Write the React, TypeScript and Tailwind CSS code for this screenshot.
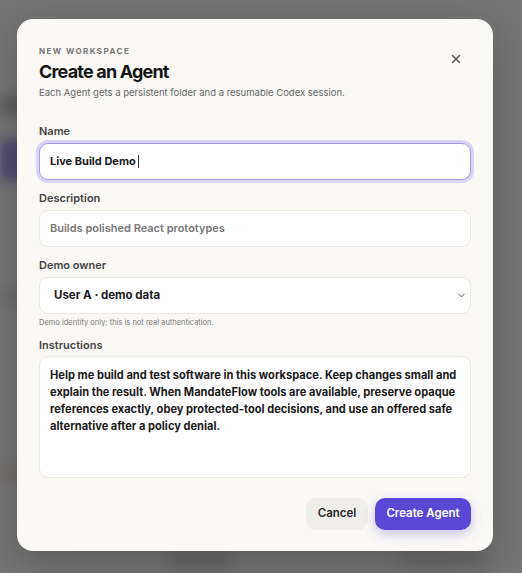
import { X, ChevronDown } from "lucide-react";

const instructions =
  "Help me build and test software in this workspace. Keep changes small and explain the result. When MandateFlow tools are available, preserve opaque references exactly, obey protected-tool decisions, and use an offered safe alternative after a policy denial.";

export default function App() {
  return (
    <div
      className="relative h-[573px] w-full overflow-hidden bg-[#767676]"
      style={{ fontFamily: "Inter, 'Noto Sans', sans-serif" }}
    >
      {/* blurred app behind the dialog */}
      <div className="absolute inset-0 blur-[6px]">
        <div className="absolute left-0 top-[96px] h-[20px] w-[40px] bg-[#606060]" />
        <div className="absolute left-0 top-[140px] h-[40px] w-[40px] bg-[#514a70]" />
        <div className="absolute left-0 top-[290px] h-[14px] w-[30px] bg-[#6c6c6c]" />
        <div className="absolute left-0 top-[466px] h-[14px] w-[30px] bg-[#7a6b6b]" />
        <div className="absolute left-[170px] top-[550px] h-[20px] w-[60px] bg-[#6a6a6a]" />
        <div className="absolute left-[400px] top-[550px] h-[20px] w-[90px] bg-[#6e6e6e]" />
      </div>

      <div className="relative pl-[17px] pt-[19px]">
        <div className="flex h-[532px] w-[476px] flex-col rounded-[16px] bg-[#faf9f6] px-[22px] pt-[27px] shadow-[0_12px_40px_rgba(0,0,0,0.25)]">
          <div className="flex items-start justify-between">
            <div>
              <div className="text-[8px] font-bold uppercase leading-[10px] tracking-[0.18em] text-[#777]">
                New workspace
              </div>
              <h1 className="mt-[5px] text-[18px] font-bold leading-[22px] tracking-[-0.045em] text-[#161616]">
                Create an Agent
              </h1>
              <p className="mt-[3px] text-[9.5px] leading-[13px] text-[#666]">
                Each Agent gets a persistent folder and a resumable Codex session.
              </p>
            </div>
            <button className="mr-[8px] mt-[6px] text-[#555]">
              <X className="h-[14px] w-[14px]" strokeWidth={2.5} />
            </button>
          </div>

          <label className="mt-[25px] text-[11px] font-semibold leading-[14px] text-[#444]">Name</label>
          <div className="mt-[5px] flex h-[37px] items-center rounded-[9px] border border-[#a79be0] bg-white px-[10px] ring-[3px] ring-[#d9d3f4]">
            <span className="text-[11px] font-bold text-[#1a1a1a]">Live Build Demo</span>
            <span className="ml-[2px] h-[13px] w-px bg-[#333]" />
          </div>

          <label className="mt-[11px] text-[11px] font-semibold leading-[14px] text-[#444]">Description</label>
          <div className="mt-[5px] flex h-[37px] items-center rounded-[9px] border border-[#ebe9e4] bg-white px-[10px]">
            <span className="text-[11px] font-semibold text-[#777]">Builds polished React prototypes</span>
          </div>

          <label className="mt-[11px] text-[11px] font-semibold leading-[14px] text-[#444]">Demo owner</label>
          <div className="mt-[5px] flex h-[37px] items-center justify-between rounded-[9px] border border-[#ebe9e4] bg-white pl-[14px] pr-[3px]">
            <span className="text-[11.5px] font-bold text-[#1a1a1a]">User A · demo data</span>
            <ChevronDown className="h-[11px] w-[11px] text-[#444]" strokeWidth={2} />
          </div>
          <p className="mt-[4px] text-[7.5px] leading-[10px] text-[#777]">
            Demo identity only; this is not real authentication.
          </p>

          <label className="mt-[10px] text-[11px] font-semibold leading-[14px] text-[#444]">Instructions</label>
          <div className="mt-[4px] h-[122px] rounded-[9px] border border-[#ebe9e4] bg-white pb-[8px] pl-[10px] pr-[4px] pt-[10px]">
            <p className="text-[11.1px] font-bold leading-[17px] text-[#1a1a1a]">{instructions}</p>
          </div>

          <div className="mt-[20px] flex justify-end gap-[7px]">
            <button className="h-[32px] w-[62px] rounded-[10px] bg-[#efeeea] text-[11.5px] font-semibold text-[#2a2a2a]">
              Cancel
            </button>
            <button className="h-[32px] w-[96px] rounded-[10px] bg-[#5b47d6] text-[11.5px] font-semibold text-white shadow-[0_4px_12px_rgba(91,71,214,0.3)]">
              Create Agent
            </button>
          </div>
        </div>
      </div>
    </div>
  );
}
